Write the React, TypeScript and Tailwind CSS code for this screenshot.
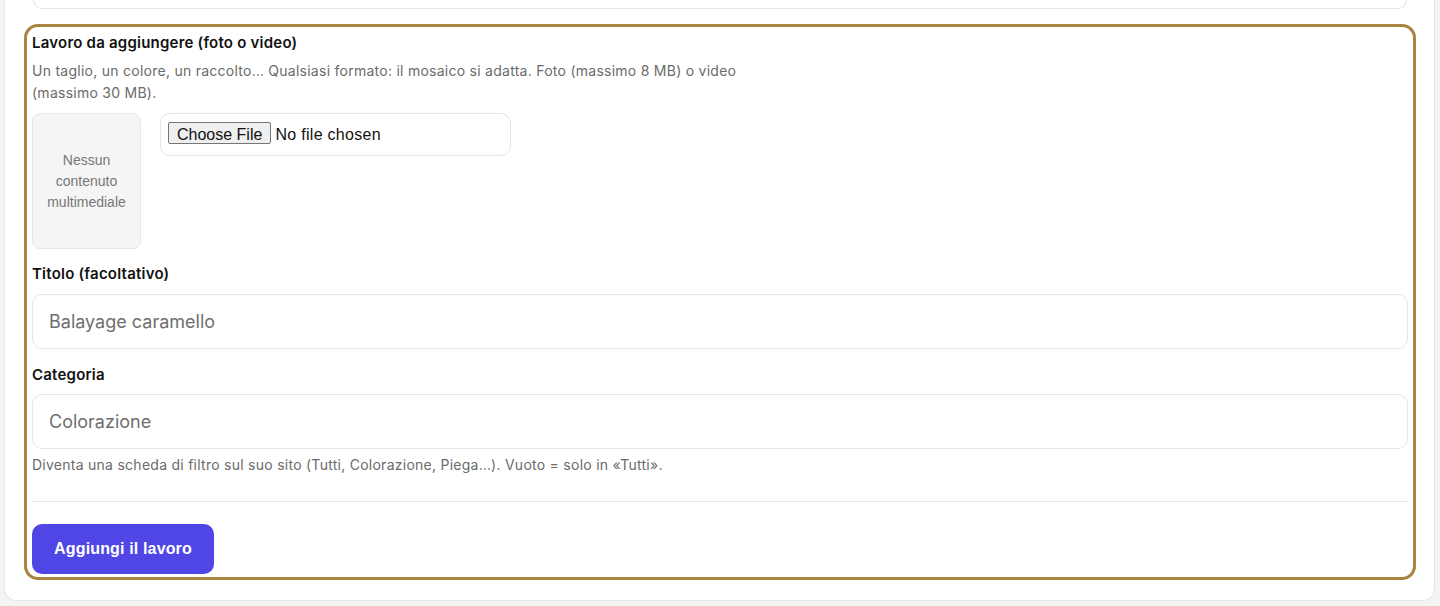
export default function App() {
  return (
    <div className="min-h-screen bg-[#f4f4f4] pl-[4px] pr-[5px] pb-[5px]">
      <div className="rounded-b-[12px] border border-t-0 border-[#e6e6e6] bg-white pl-[27px] pr-[26px] pb-[20px]">
        {/* previous item, only its bottom edge is visible */}
        <div className="h-[9px] rounded-b-[12px] border border-t-0 border-[#e5e5e5] bg-white mx-px" />

        <div className="-mx-2 mt-[15px] rounded-[14px] border-[3px] border-[#a8843f] px-[5px] pt-[5px] pb-[3px] font-['Inter',sans-serif]">
          <label className="block text-[15px] leading-[22px] font-semibold tracking-[0.22px] text-[#111]">
            Lavoro da aggiungere (foto o video)
          </label>
          <p className="mt-[6px] max-w-[740px] text-[14px] leading-[22px] tracking-[0.26px] text-[#6b6b6b]">
            Un taglio, un colore, un raccolto… Qualsiasi formato: il mosaico si adatta. Foto (massimo 8 MB) o video
            (massimo 30 MB).
          </p>

          <div className="mt-[9px] flex items-start gap-[19px]">
            <div className="flex h-[136px] w-[109px] items-center justify-center rounded-[8px] border border-[#e6e6e6] bg-[#f5f5f5] text-center font-['Liberation_Sans',Arial,sans-serif] text-[14px] leading-[21px] text-[#777]">
              Nessun
              <br />
              contenuto
              <br />
              multimediale
            </div>
            <div className="flex h-[43px] w-[351px] items-center rounded-[10px] border border-[#e5e5e5] bg-white px-[7px]">
              <input
                type="file"
                className="font-['Liberation_Sans',Arial,sans-serif] text-[16px] tracking-[0.3px] text-[#111] file:mr-[4px] file:h-[22px] file:rounded-[2px] file:border file:border-[#767676] file:bg-[#efefef] file:px-[8px] file:text-[16px] file:tracking-normal file:text-[#111]"
              />
            </div>
          </div>

          <label className="mt-[14px] block text-[15px] leading-[22px] font-semibold tracking-[0.22px] text-[#111]">
            Titolo (facoltativo)
          </label>
          <input
            type="text"
            placeholder="Balayage caramello"
            className="mt-[9px] block h-[55px] w-full rounded-[10px] border border-[#e5e5e5] bg-white px-4 text-[18px] text-[#111] placeholder:text-[#6f6f6f] outline-none"
          />

          <label className="mt-[15px] block text-[15px] leading-[22px] font-semibold tracking-[0.22px] text-[#111]">
            Categoria
          </label>
          <input
            type="text"
            placeholder="Colorazione"
            className="mt-[8px] block h-[55px] w-full rounded-[10px] border border-[#e5e5e5] bg-white px-4 text-[18px] text-[#111] placeholder:text-[#6f6f6f] outline-none"
          />
          <p className="mt-[6px] text-[14px] leading-[20px] tracking-[0.26px] text-[#6b6b6b]">
            Diventa una scheda di filtro sul suo sito (Tutti, Colorazione, Piega…). Vuoto = solo in «Tutti».
          </p>

          <div className="mt-[26px] h-px bg-[#e5e5e5]" />

          <button className="mt-[22px] h-[50px] w-[182px] rounded-[10px] bg-[#4f46e5] font-['Liberation_Sans',Arial,sans-serif] text-[16px] font-bold tracking-[0.15px] text-white">
            Aggiungi il lavoro
          </button>
        </div>
      </div>
    </div>
  );
}
